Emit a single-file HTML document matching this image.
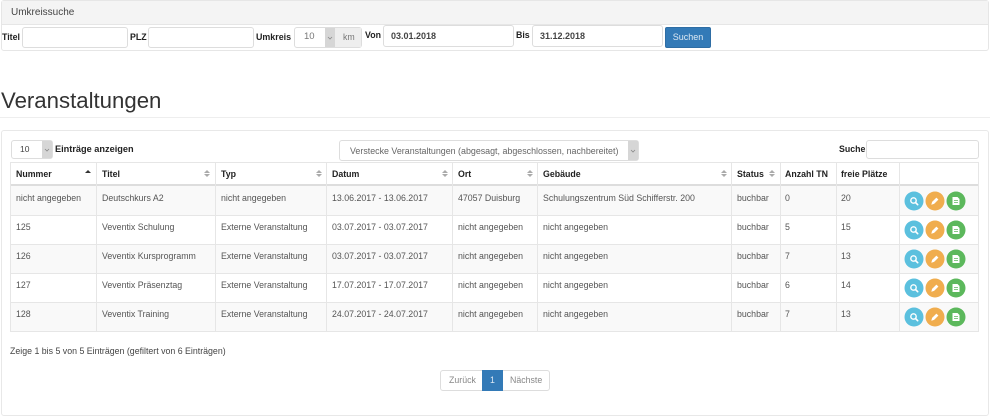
<!DOCTYPE html>
<html><head><meta charset="utf-8"><style>
html,body{margin:0;padding:0;background:#fff}
body{width:990px;height:416px;position:relative;overflow:hidden;font-family:"Liberation Sans",sans-serif;font-size:8.8px;line-height:10px;color:#333;filter:blur(.25px)}
.a{position:absolute;box-sizing:border-box;white-space:nowrap}
.inp{border:1px solid #ddd;border-radius:3px;background:#fff}
.b{font-weight:bold;color:#222}
.hl{background:#e6e6e6}
.t{color:#555}
.arr{position:absolute;width:0;height:0;border-left:3px solid transparent;border-right:3px solid transparent}
.up{border-bottom:3px solid #aaa}
.dn{border-top:3px solid #aaa}
</style></head><body>
<!-- search panel -->
<div class="a" style="left:1px;top:0;width:988px;height:51px;border:1px solid #e6e6e6;border-radius:3px"></div>
<div class="a" style="left:2px;top:1px;width:986px;height:24px;background:#f4f4f4;border-bottom:1px solid #e6e6e6"></div>
<div class="a" style="left:11px;top:7px;font-size:10px;line-height:12px;color:#444">Umkreissuche</div>
<div class="a b" style="left:2px;top:32px">Titel</div>
<div class="a inp" style="left:22px;top:27px;width:106px;height:21px"></div>
<div class="a b" style="left:130px;top:32px">PLZ</div>
<div class="a inp" style="left:148px;top:27px;width:106px;height:21px"></div>
<div class="a b" style="left:256px;top:32px;font-size:8.9px">Umkreis</div>
<div class="a inp" style="left:294px;top:27px;width:68px;height:21px"></div>
<div class="a" style="left:304px;top:32px;color:#777;font-size:9.5px">10</div>
<div class="a" style="left:325px;top:28px;width:10px;height:19px;background:#d6d6d6"></div>
<div class="a" style="left:335px;top:28px;width:26px;height:19px;background:#eee"></div>
<div class="a" style="left:343px;top:32px;color:#777">km</div>
<svg class="a" style="left:327px;top:36px" width="6" height="4"><path d="M1 1l2 2 2-2" fill="none" stroke="#888" stroke-width=".8"/></svg>
<div class="a b" style="left:365px;top:30px">Von</div>
<div class="a inp" style="left:383px;top:25px;width:131px;height:22px"></div>
<div class="a" style="left:391px;top:31px;color:#444;font-weight:bold;font-size:9px">03.01.2018</div>
<div class="a b" style="left:516px;top:30px">Bis</div>
<div class="a inp" style="left:532px;top:25px;width:131px;height:22px"></div>
<div class="a" style="left:540px;top:31px;color:#444;font-weight:bold;font-size:9px">31.12.2018</div>
<div class="a" style="left:665px;top:27px;width:46px;height:21px;background:#337ab7;border:1px solid #2e6da4;border-radius:2px;color:#dce8f3;text-align:center;line-height:19px;font-size:9px">Suchen</div>
<!-- heading -->
<div class="a" style="left:1px;top:87px;font-size:22.2px;line-height:28px;color:#333">Veranstaltungen</div>
<div class="a" style="left:0;top:117px;width:990px;height:1px;background:#eee"></div>
<!-- panel -->
<div class="a" style="left:1px;top:130px;width:988px;height:286px;border:1px solid #e8e8e8;border-radius:3px"></div>
<div class="a inp" style="left:11px;top:140px;width:42px;height:19px"></div>
<div class="a" style="left:20px;top:144px;font-size:8.5px;color:#444">10</div>
<div class="a" style="left:42px;top:141px;width:10px;height:17px;background:#d6d6d6"></div>
<svg class="a" style="left:44px;top:148px" width="6" height="4"><path d="M1 1l2 2 2-2" fill="none" stroke="#888" stroke-width=".8"/></svg>
<div class="a b" style="left:55px;top:144px;font-size:9.2px">Einträge anzeigen</div>
<div class="a inp" style="left:339px;top:140px;width:300px;height:21px"></div>
<div class="a" style="left:350px;top:146px;color:#666;font-size:8.9px">Verstecke Veranstaltungen (abgesagt, abgeschlossen, nachbereitet)</div>
<div class="a" style="left:628px;top:141px;width:10px;height:19px;background:#d6d6d6"></div>
<svg class="a" style="left:630px;top:149px" width="6" height="4"><path d="M1 1l2 2 2-2" fill="none" stroke="#888" stroke-width=".8"/></svg>
<div class="a b" style="left:839px;top:144px">Suche</div>
<div class="a inp" style="left:866px;top:140px;width:113px;height:19px"></div>
<!-- table backgrounds -->
<div class="a" style="left:11px;top:185px;width:968px;height:30px;background:#f9f9f9"></div>
<div class="a" style="left:11px;top:244px;width:968px;height:29px;background:#f9f9f9"></div>
<div class="a" style="left:11px;top:303px;width:968px;height:29px;background:#f9f9f9"></div>
<!-- horizontal lines -->
<div class="a hl" style="left:10px;top:162px;width:969px;height:1px"></div>
<div class="a hl" style="left:10px;top:184px;width:969px;height:2px;background:#ddd"></div>
<div class="a hl" style="left:10px;top:215px;width:969px;height:1px"></div>
<div class="a hl" style="left:10px;top:244px;width:969px;height:1px"></div>
<div class="a hl" style="left:10px;top:273px;width:969px;height:1px"></div>
<div class="a hl" style="left:10px;top:302px;width:969px;height:1px"></div>
<div class="a hl" style="left:10px;top:331px;width:969px;height:1px"></div>
<!-- vertical lines -->
<div class="a hl" style="left:10px;top:162px;width:1px;height:170px"></div>
<div class="a hl" style="left:96px;top:162px;width:1px;height:170px"></div>
<div class="a hl" style="left:215px;top:162px;width:1px;height:170px"></div>
<div class="a hl" style="left:326px;top:162px;width:1px;height:170px"></div>
<div class="a hl" style="left:452px;top:162px;width:1px;height:170px"></div>
<div class="a hl" style="left:537px;top:162px;width:1px;height:170px"></div>
<div class="a hl" style="left:731px;top:162px;width:1px;height:170px"></div>
<div class="a hl" style="left:780px;top:162px;width:1px;height:170px"></div>
<div class="a hl" style="left:836px;top:162px;width:1px;height:170px"></div>
<div class="a hl" style="left:899px;top:162px;width:1px;height:170px"></div>
<div class="a hl" style="left:978px;top:162px;width:1px;height:170px"></div>
<!-- header -->
<div class="a b" style="left:16px;top:169px">Nummer</div>
<div class="a b" style="left:102px;top:169px">Titel</div>
<div class="a b" style="left:221px;top:169px">Typ</div>
<div class="a b" style="left:332px;top:169px">Datum</div>
<div class="a b" style="left:458px;top:169px">Ort</div>
<div class="a b" style="left:543px;top:169px">Gebäude</div>
<div class="a b" style="left:737px;top:169px">Status</div>
<div class="a b" style="left:785px;top:169px">Anzahl TN</div>
<div class="a b" style="left:841px;top:169px">freie Plätze</div>
<div class="arr" style="left:85px;top:170px;border-bottom:3px solid #333"></div>
<div class="arr up" style="left:204px;top:170px"></div><div class="arr dn" style="left:204px;top:174px"></div>
<div class="arr up" style="left:316px;top:170px"></div><div class="arr dn" style="left:316px;top:174px"></div>
<div class="arr up" style="left:442px;top:170px"></div><div class="arr dn" style="left:442px;top:174px"></div>
<div class="arr up" style="left:527px;top:170px"></div><div class="arr dn" style="left:527px;top:174px"></div>
<div class="arr up" style="left:721px;top:170px"></div><div class="arr dn" style="left:721px;top:174px"></div>
<div class="arr up" style="left:769px;top:170px"></div><div class="arr dn" style="left:769px;top:174px"></div>
<!-- row 1 -->
<div class="a t" style="left:16px;top:193px">nicht angegeben</div>
<div class="a t" style="left:102px;top:193px">Deutschkurs A2</div>
<div class="a t" style="left:221px;top:193px">nicht angegeben</div>
<div class="a t" style="left:332px;top:193px">13.06.2017 - 13.06.2017</div>
<div class="a t" style="left:458px;top:193px">47057 Duisburg</div>
<div class="a t" style="left:543px;top:193px">Schulungszentrum Süd Schifferstr. 200</div>
<div class="a t" style="left:737px;top:193px">buchbar</div>
<div class="a t" style="left:785px;top:193px">0</div>
<div class="a t" style="left:841px;top:193px">20</div>
<!-- row 2 -->
<div class="a t" style="left:16px;top:222px">125</div>
<div class="a t" style="left:102px;top:222px">Veventix Schulung</div>
<div class="a t" style="left:221px;top:222px">Externe Veranstaltung</div>
<div class="a t" style="left:332px;top:222px">03.07.2017 - 03.07.2017</div>
<div class="a t" style="left:458px;top:222px">nicht angegeben</div>
<div class="a t" style="left:543px;top:222px">nicht angegeben</div>
<div class="a t" style="left:737px;top:222px">buchbar</div>
<div class="a t" style="left:785px;top:222px">5</div>
<div class="a t" style="left:841px;top:222px">15</div>
<!-- row 3 -->
<div class="a t" style="left:16px;top:251px">126</div>
<div class="a t" style="left:102px;top:251px">Veventix Kursprogramm</div>
<div class="a t" style="left:221px;top:251px">Externe Veranstaltung</div>
<div class="a t" style="left:332px;top:251px">03.07.2017 - 03.07.2017</div>
<div class="a t" style="left:458px;top:251px">nicht angegeben</div>
<div class="a t" style="left:543px;top:251px">nicht angegeben</div>
<div class="a t" style="left:737px;top:251px">buchbar</div>
<div class="a t" style="left:785px;top:251px">7</div>
<div class="a t" style="left:841px;top:251px">13</div>
<!-- row 4 -->
<div class="a t" style="left:16px;top:280px">127</div>
<div class="a t" style="left:102px;top:280px">Veventix Präsenztag</div>
<div class="a t" style="left:221px;top:280px">Externe Veranstaltung</div>
<div class="a t" style="left:332px;top:280px">17.07.2017 - 17.07.2017</div>
<div class="a t" style="left:458px;top:280px">nicht angegeben</div>
<div class="a t" style="left:543px;top:280px">nicht angegeben</div>
<div class="a t" style="left:737px;top:280px">buchbar</div>
<div class="a t" style="left:785px;top:280px">6</div>
<div class="a t" style="left:841px;top:280px">14</div>
<!-- row 5 -->
<div class="a t" style="left:16px;top:309px">128</div>
<div class="a t" style="left:102px;top:309px">Veventix Training</div>
<div class="a t" style="left:221px;top:309px">Externe Veranstaltung</div>
<div class="a t" style="left:332px;top:309px">24.07.2017 - 24.07.2017</div>
<div class="a t" style="left:458px;top:309px">nicht angegeben</div>
<div class="a t" style="left:543px;top:309px">nicht angegeben</div>
<div class="a t" style="left:737px;top:309px">buchbar</div>
<div class="a t" style="left:785px;top:309px">7</div>
<div class="a t" style="left:841px;top:309px">13</div>
<!-- action icons -->
<svg class="a" style="left:900px;top:186px" width="79" height="146" viewBox="0 0 79 146">
<defs>
<g id="btns">
<circle cx="14" cy="15" r="9.500" fill="#5bc0de"/>
<circle cx="13.500" cy="14.500" r="2.700" fill="none" stroke="#fff" stroke-width="1.400"/>
<path d="M15.500 16.500l2.200 2.200" stroke="#fff" stroke-width="1.600" stroke-linecap="round"/>
<circle cx="35" cy="15" r="9.500" fill="#f0ad4e"/>
<path d="M31.300 18.700l.8-2.800 4.300-4.300 2 2-4.300 4.300z" fill="#fff"/>
<circle cx="56" cy="15" r="9.500" fill="#5cb85c"/>
<path d="M52.500 11h5l2 2v6h-7z" fill="#fff"/>
<path d="M54 14.500h4M54 16.500h4" stroke="#5cb85c" stroke-width=".7"/>
</g>
</defs>
<use href="#btns" y="0"/>
<use href="#btns" y="29"/>
<use href="#btns" y="58"/>
<use href="#btns" y="87"/>
<use href="#btns" y="116"/>
</svg>
<!-- footer -->
<div class="a t" style="left:10px;top:346px;color:#444">Zeige 1 bis 5 von 5 Einträgen (gefiltert von 6 Einträgen)</div>
<div class="a inp" style="left:440px;top:370px;width:110px;height:21px"></div>
<div class="a" style="left:449px;top:375px;color:#888">Zurück</div>
<div class="a" style="left:482px;top:370px;width:21px;height:21px;background:#337ab7;color:#dce8f3;text-align:center;line-height:21px">1</div>
<div class="a" style="left:510px;top:375px;color:#888">Nächste</div>
</body></html>
